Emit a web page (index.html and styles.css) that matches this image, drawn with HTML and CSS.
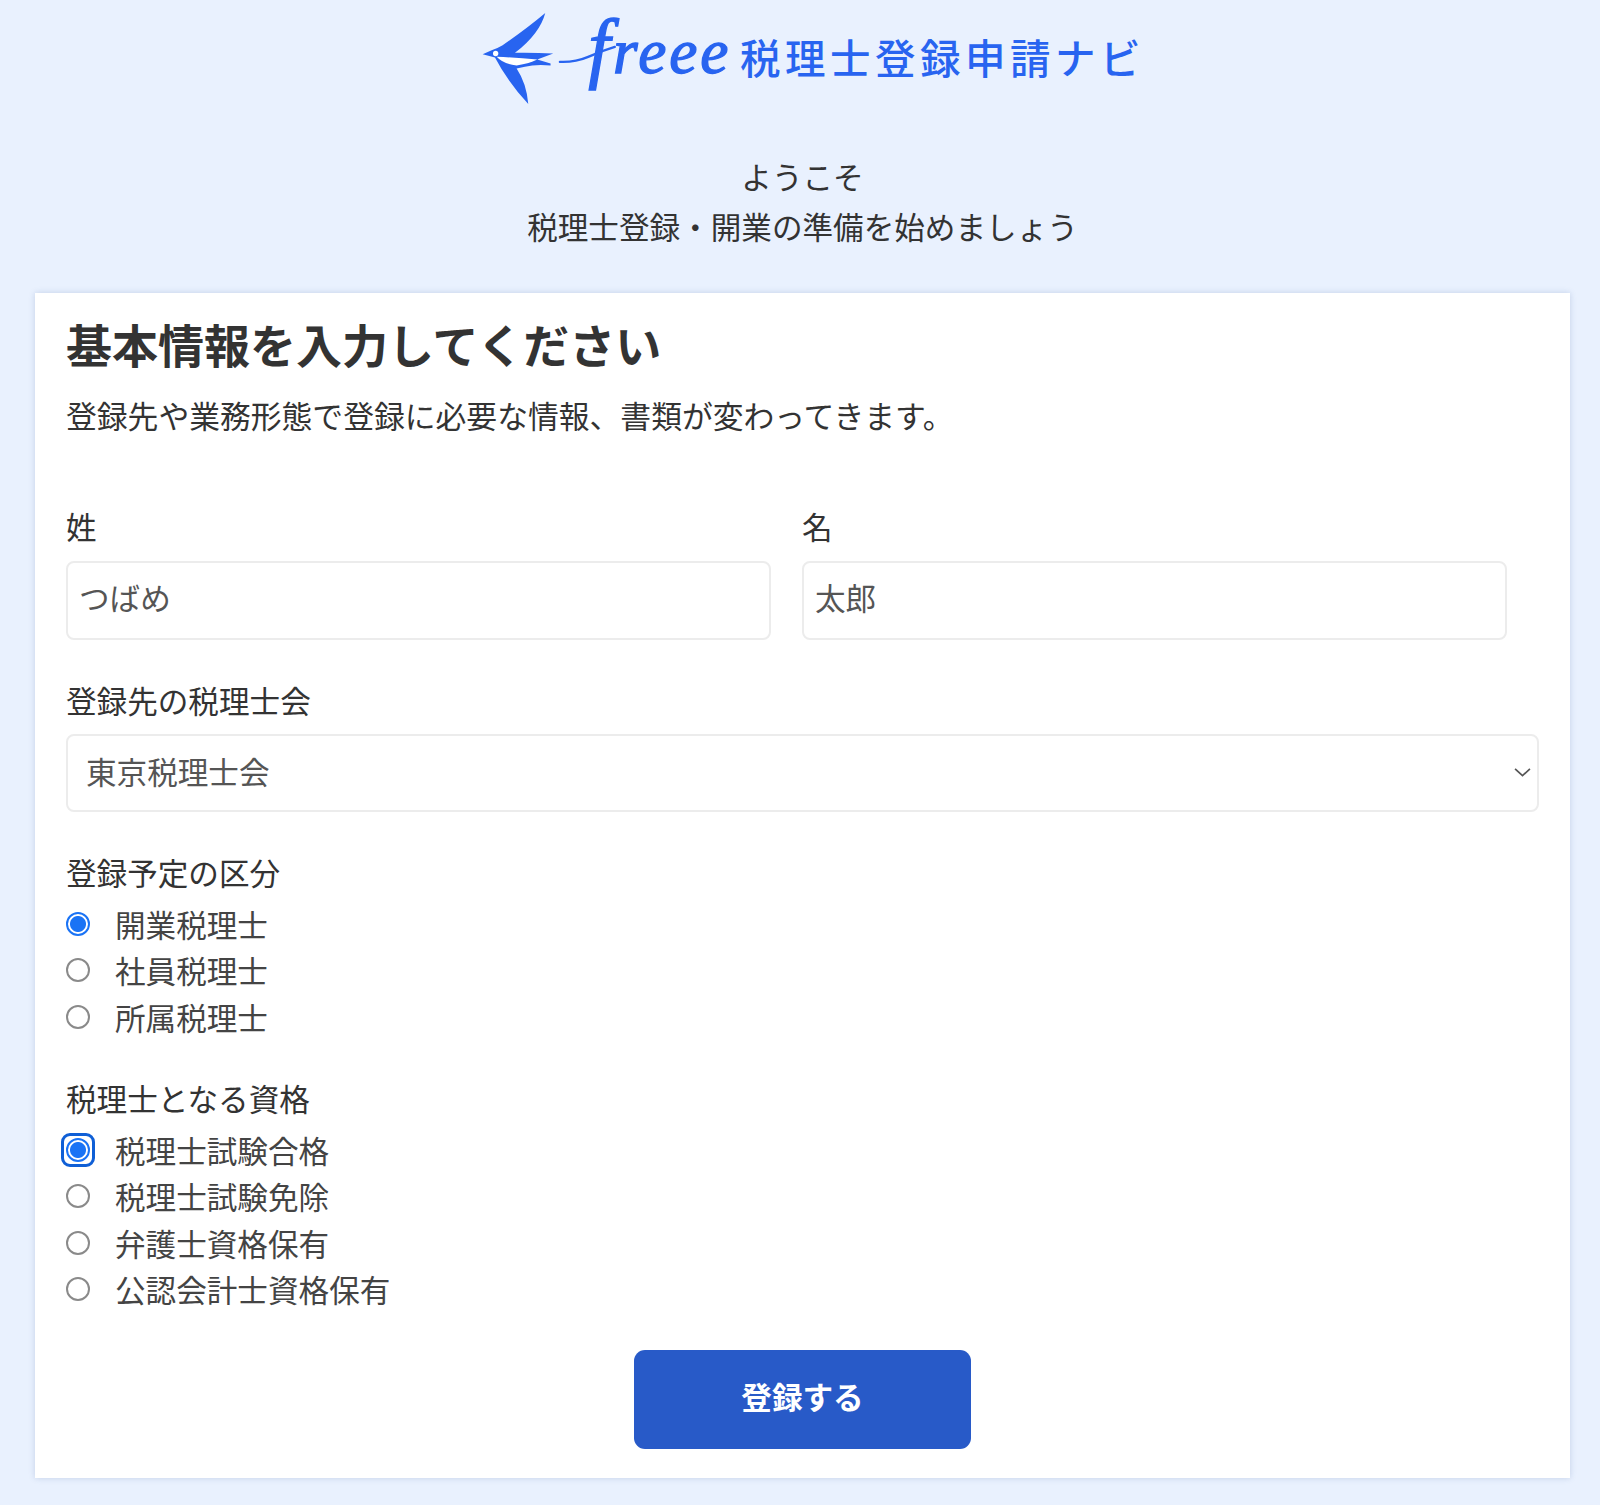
FILE: index.html
```html
<!DOCTYPE html>
<html lang="ja">
<head>
<meta charset="utf-8">
<title>freee 税理士登録申請ナビ</title>
<link rel="stylesheet" href="styles.css">
</head>
<body>
<header class="brand">
  <svg class="logo" viewBox="60 30 745 290" role="img" aria-label="freee">
    <path class="ink" d="M68 162 L95 150 Q115 143 128 135 Q200 85 256 38 Q240 100 165 158 Q220 157 280 160 L232 178 L272 190 L272 196 Q225 192 195 200 L170 205 Q200 250 205 312 Q140 240 105 172 Z"/>
    <path class="paper" d="M110 170 Q170 172 232 178 Q210 190 170 196 Q130 192 110 170 Z"/>
    <circle class="paper" cx="107" cy="160" r="8"/>
    <path class="swoosh" d="M300 185 Q345 187 385 170 Q425 152 465 140"/>
    <text class="wordmark" x="385" y="220"><tspan class="wordmark-f">f</tspan><tspan>reee</tspan></text>
  </svg>
  <span class="brand-name">税理士登録申請ナビ</span>
</header>

<p class="intro">ようこそ<br>税理士登録・開業の準備を始めましょう</p>

<main class="card">
  <h1 class="title">基本情報を入力してください</h1>
  <p class="lead">登録先や業務形態で登録に必要な情報、書類が変わってきます。</p>

  <form class="form">
    <div class="name-row">
      <label class="field">
        <span class="label">姓</span>
        <input class="text-input" type="text" value="つばめ">
      </label>
      <label class="field">
        <span class="label">名</span>
        <input class="text-input" type="text" value="太郎">
      </label>
    </div>

    <label class="field section">
      <span class="label">登録先の税理士会</span>
      <span class="select-wrap">
        <select class="select"><option>東京税理士会</option></select>
        <svg class="chevron" viewBox="0 0 16 10"><path d="M1 1.5 L8 8 L15 1.5"/></svg>
      </span>
    </label>

    <fieldset class="group section">
      <legend class="label">登録予定の区分</legend>
      <label class="radio"><span class="radio-box"><input type="radio" name="kubun" checked></span><span>開業税理士</span></label>
      <label class="radio"><span class="radio-box"><input type="radio" name="kubun"></span><span>社員税理士</span></label>
      <label class="radio"><span class="radio-box"><input type="radio" name="kubun"></span><span>所属税理士</span></label>
    </fieldset>

    <fieldset class="group section-tight">
      <legend class="label">税理士となる資格</legend>
      <label class="radio"><span class="radio-box is-focused"><input type="radio" name="shikaku" checked></span><span>税理士試験合格</span></label>
      <label class="radio"><span class="radio-box"><input type="radio" name="shikaku"></span><span>税理士試験免除</span></label>
      <label class="radio"><span class="radio-box"><input type="radio" name="shikaku"></span><span>弁護士資格保有</span></label>
      <label class="radio"><span class="radio-box"><input type="radio" name="shikaku"></span><span>公認会計士資格保有</span></label>
    </fieldset>

    <div class="actions">
      <button class="submit" type="button">登録する</button>
    </div>
  </form>
</main>
</body>
</html>
```

FILE: styles.css
```css
* { box-sizing: border-box; }

html, body { margin: 0; padding: 0; }

body {
  background: #e9f1fe;
  color: #333;
  font-family: "Noto Sans CJK JP", "Noto Sans", sans-serif;
  font-size: 30.6px;
  line-height: 46px;
  padding: 10px 30px 27px 35px;
}

.brand {
  display: flex;
  align-items: flex-start;
  justify-content: center;
  gap: 12px;
  height: 141px;
  padding-left: 20px;
}

.logo { width: 248px; height: 97px; flex: none; overflow: visible; }
.ink { fill: #2864f0; }
.paper { fill: #fff; }
.swoosh { fill: none; stroke: #2864f0; stroke-width: 7; stroke-linecap: round; }
.wordmark {
  font-family: "Liberation Serif", serif;
  font-style: italic;
  font-size: 190px;
  letter-spacing: 9px;
  fill: #2864f0;
  stroke: #2864f0;
  stroke-width: 4;
}
.wordmark-f { font-size: 235px; }

.brand-name {
  color: #2864f0;
  font-size: 40.5px;
  font-weight: 500;
  letter-spacing: 4.5px;
  line-height: 60px;
  margin-top: 17px;
  white-space: nowrap;
}

.intro {
  margin: 0 0 42px;
  text-align: center;
  line-height: 50px;
}

.card {
  background: #fff;
  box-shadow: 0 0 6px rgba(60, 90, 150, 0.22);
  padding: 20px 31px 31px;
  height: 1185px;
}

.title {
  margin: 0;
  font-size: 46px;
  font-weight: 700;
  line-height: 60px;
}

.lead { margin: 19px 0 65px; font-size: 30.8px; }

.name-row {
  display: grid;
  grid-template-columns: 705px 705px;
  gap: 31px;
}

.field { display: block; }
.label { display: block; padding: 0; }

.text-input,
.select {
  display: block;
  width: 100%;
  background: #fff;
  border: 2px solid #ececec;
  border-radius: 8px;
  color: #555;
  font: inherit;
  outline: none;
}

.text-input {
  height: 79px;
  margin-top: 12px;
  padding: 0 11px 7px;
}

.section { margin-top: 37px; }
.section-tight { margin-top: 35px; }

.select-wrap { display: block; position: relative; margin-top: 11px; }

.select {
  height: 78px;
  padding: 0 18px 4px;
  appearance: none;
}

.chevron {
  position: absolute;
  right: 8px;
  top: 33px;
  width: 17px;
  height: 11px;
}

.chevron path { fill: none; stroke: #555; stroke-width: 1.6; }

.group { border: 0; margin-left: 0; margin-right: 0; padding: 0; min-width: 0; }
.group legend { padding: 0; margin-bottom: 5.5px; }

.radio {
  display: flex;
  align-items: center;
  gap: 25px;
  height: 46.5px;
  color: #444;
}

.radio-box {
  display: block;
  flex: none;
  width: 24px;
  height: 24px;
}

.radio input {
  appearance: none;
  display: block;
  width: 24px;
  height: 24px;
  margin: 0;
  border: 2px solid #8a8a8a;
  border-radius: 50%;
  background: #fff;
}

.radio input:checked {
  border-color: #1a73f5;
  background: radial-gradient(circle, #1a73f5 0 7.5px, #fff 8.5px);
}

.radio-box.is-focused {
  border-radius: 4px;
  outline: 3.5px solid #0f5fd6;
  outline-offset: 2px;
}

.actions {
  display: flex;
  justify-content: center;
  margin-top: 37px;
}

.submit {
  width: 337px;
  height: 99px;
  padding: 0 0 6px;
  background: #285ac8;
  border: 0;
  border-radius: 11px;
  color: #fff;
  font: inherit;
  font-weight: 700;
}
```
